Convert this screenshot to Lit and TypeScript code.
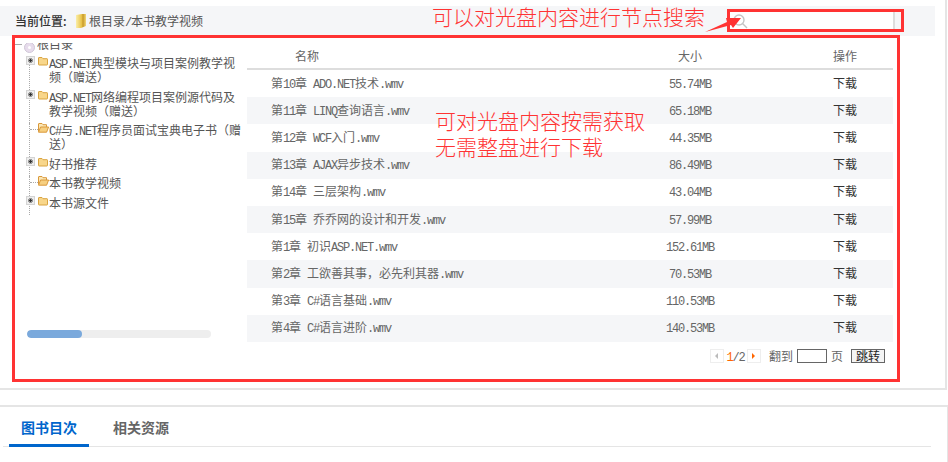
import { LitElement, html, css } from "lit";
import { customElement } from "lit/decorators.js";

const mixed = (t: string) =>
  t.split(/([\x20-\x7e]+)/).map((p, i) => (i % 2 ? html`<span class="a">${p}</span>` : p));

const files: [string, string][] = [
  ["第10章 ADO.NET技术.wmv", "55.74MB"],
  ["第11章 LINQ查询语言.wmv", "65.18MB"],
  ["第12章 WCF入门.wmv", "44.35MB"],
  ["第13章 AJAX异步技术.wmv", "86.49MB"],
  ["第14章 三层架构.wmv", "43.04MB"],
  ["第15章 乔乔网的设计和开发.wmv", "57.99MB"],
  ["第1章 初识ASP.NET.wmv", "152.61MB"],
  ["第2章 工欲善其事，必先利其器.wmv", "70.53MB"],
  ["第3章 C#语言基础.wmv", "110.53MB"],
  ["第4章 C#语言进阶.wmv", "140.53MB"],
];

const nodes: [string, boolean][] = [
  ["ASP.NET典型模块与项目案例教学视频（赠送）", true],
  ["ASP.NET网络编程项目案例源代码及教学视频（赠送）", true],
  ["C#与.NET程序员面试宝典电子书（赠送）", false],
  ["好书推荐", true],
  ["本书教学视频", false],
  ["本书源文件", true],
];

const plus = html`<svg class="plus" width="9" height="9" viewBox="0 0 9 9">
  <rect width="9" height="9" fill="#d4d4d4"/><rect x="1" y="1" width="7" height="7" fill="#eee"/>
  <rect x="2" y="3" width="5" height="3" fill="#999"/><rect x="3" y="2" width="3" height="5" fill="#999"/>
  <rect x="3" y="4" width="3" height="1" fill="#333"/><rect x="4" y="3" width="1" height="3" fill="#333"/>
</svg>`;
const folder = html`<svg class="folder" width="10" height="9" viewBox="0 0 10 9">
  <path d="M.5 2V1q0-.5.5-.5h3l1 1.2h4q.5 0 .5.5v5.3q0 .5-.5.5H1q-.5 0-.5-.5z" fill="#f8d68a" stroke="#d9a441"/>
</svg>`;
const openFolder = html`<svg class="folder open" width="11" height="10" viewBox="0 0 11 10">
  <path d="M.5 8.5V1q0-.5.5-.5h3l1 1.2h3.5V4" fill="#fbe7b5" stroke="#d9983a"/>
  <path d="M.5 9.2 2.6 4h8l-2 5.2z" fill="#f6cf80" stroke="#d9983a"/>
</svg>`;

@customElement("app-root")
export class AppRoot extends LitElement {
  static styles = css`
    :host { display: block; width: 948px; height: 462px; overflow: hidden; position: relative;
      background: #fff; color: #666; font: 12px/14px "Noto Sans CJK SC", sans-serif; }
    .a { font-family: "Liberation Mono", monospace; font-size: 12px; line-height: 0; letter-spacing: -1.2px; }
    .panel { box-sizing: border-box; width: 947px; height: 390px; padding-top: 6px;
      border-right: 2px solid #e5e5e5; border-bottom: 2px solid #e5e5e5; }
    .crumb { box-sizing: border-box; width: 935px; height: 30px; padding: 0 40px 0 15px; background: #f5f6f8;
      display: flex; align-items: center; color: #555; }
    .crumb b { font-weight: 500; color: #333; width: 61px; }
    .crumb svg { margin-right: 3px; }
    .search { margin-left: auto; width: 167px; height: 18px; box-sizing: border-box; background: #fff;
      border-right: 2px solid #ddd; display: flex; align-items: center; padding-left: 4px; }
    .body { display: flex; margin: 7px 0 0 15px; }
    .side { width: 232px; flex: none; }
    .tree { height: 287px; overflow: hidden; }
    .root { display: flex; margin-top: -6px; height: 19px; align-items: flex-start; color: #555; }
    .root .minus { width: 7px; height: 1px; background: #aaa; margin-top: 7px; }
    .root svg { margin: 5px 2px 0 2px; }
    .node { margin-left: 14px; border-left: 1px dotted #aaa; display: flex; align-items: flex-start; padding-bottom: 5.5px; color: #555; }
    .plus { margin-left: -4px; flex: none; }
    .folder { margin-left: 3px; margin-top: 1px; flex: none; }
    .folder.open { margin-left: 0; margin-top: 0; }
    .dash { width: 8px; margin-top: 6px; border-top: 1px dotted #aaa; flex: none; }
    .label { width: 195px; margin-left: 1px; line-height: 14px; }
    .node.leaf .label { margin-left: 0; }
    .scroll { width: 184px; height: 8px; margin-left: 12px; border-radius: 4px; background: #eee; overflow: hidden; }
    .thumb { width: 55px; height: 8px; border-radius: 4px; background: #7aa9dc; }
    .table { width: 646px; flex: none; }
    .grid { display: grid; grid-template-columns: 336px 214px 96px; align-items: center; }
    .head { height: 27px; box-sizing: border-box; border-bottom: 2px solid #ddd; }
    .head > div { text-align: center; }
    .head > div:first-child { text-align: left; padding-left: 48px; }
    .row { height: 27.2px; box-sizing: border-box; padding-bottom: 2px; }
    .row:nth-child(even) { background: #f5f6f8; }
    .row > div:first-child { padding-left: 24px; }
    .size { text-align: center; }
    .op { text-align: center; color: #333; }
    .pager { display: flex; justify-content: flex-end; align-items: center; height: 14px; margin-top: 7px; padding-right: 8px; }
    .pbtn { box-sizing: border-box; width: 14px; height: 14px; border: 1px solid #eee; display: flex; align-items: center; justify-content: center; }
    .tri-l { border: 3px solid transparent; border-right: 3px solid #bbb; border-left: 0; }
    .tri-r { border: 3px solid transparent; border-left: 3px solid #f60; border-right: 0; }
    .nums { width: 23px; text-align: center; }
    .cur { color: #f60; }
    .to { margin-left: 8px; }
    .inp { box-sizing: border-box; width: 30px; height: 14px; border: 1px solid #666; margin: 0 4px; }
    .go { box-sizing: border-box; width: 34px; height: 14px; margin-left: 8px; border: 1px solid #666; background: #f4f4f4;
      color: #222; text-align: center; line-height: 12px; }
    .panel2 { box-sizing: border-box; width: 948px; margin-top: 15px; height: 60px; border-top: 2px solid #e5e5e5; border-right: 1px solid #e5e5e5; }
    .tabs { display: flex; gap: 12px; box-sizing: border-box; width: 928px; height: 40px; margin-left: 3px; padding-left: 6px; border-bottom: 1px solid #e5e5e5; }
    .tab { box-sizing: border-box; width: 80px; height: 40px; line-height: 40px; text-align: center; font-size: 14px; font-weight: 700; }
    .tab.on { color: #06c; border-bottom: 3px solid #06c; }
    .mark { position: absolute; box-sizing: border-box; border: 3px solid #f33; }
    .m1 { left: 12px; top: 35px; width: 888px; height: 347px; }
    .m2 { left: 727px; top: 9px; width: 177px; height: 23px; }
    .note { position: absolute; color: #f33; font-size: 21px; line-height: 26px; font-weight: 300; white-space: nowrap; }
    .n1 { left: 432px; top: 3px; }
    .n2 { left: 435px; top: 107px; }
    .arrow { position: absolute; left: 700px; top: 10px; }
  `;

  render() {
    return html`
      <div class="panel">
        <div class="crumb">
          <b>当前位置:</b>
          <svg width="10" height="14" viewBox="0 0 10 14">
            <defs><linearGradient id="fg" x1="0" x2="1" y1="0" y2="0">
              <stop offset="0" stop-color="#fbeea8"/><stop offset=".55" stop-color="#e8c34a"/><stop offset=".7" stop-color="#c79a2a"/><stop offset="1" stop-color="#f3d978"/>
            </linearGradient></defs>
            <path d="M0 1 6 0h4v12l-5 2H0z" fill="url(#fg)"/>
          </svg>
          <span>${mixed("根目录/本书教学视频")}</span>
          <div class="search">
            <svg width="16" height="16" viewBox="0 0 16 16" fill="none" stroke="#c4c4c4" stroke-width="1.4"><circle cx="7" cy="7" r="5"/><path d="M10.5 10.5 15 15"/></svg>
          </div>
        </div>
        <div class="body">
          <div class="side">
            <div class="tree">
              <div class="root">
                <span class="minus"></span>
                <svg width="11" height="11" viewBox="0 0 11 11"><circle cx="5.5" cy="5.5" r="5" fill="#e7dcec" stroke="#cfc6d6"/><circle cx="5.5" cy="5.5" r="1.5" fill="#fff"/></svg>
                <span>根目录</span>
              </div>
              ${nodes.map(([t, closed]) => html`
                <div class="node ${closed ? "" : "leaf"}">
                  ${closed ? html`${plus}${folder}` : html`<span class="dash"></span>${openFolder}`}
                  <div class="label">${mixed(t)}</div>
                </div>`)}
            </div>
            <div class="scroll"><div class="thumb"></div></div>
          </div>
          <div class="table">
            <div class="grid head"><div>名称</div><div>大小</div><div>操作</div></div>
            <div>
              ${files.map(([n, s]) => html`
                <div class="grid row"><div>${mixed(n)}</div><div class="size">${mixed(s)}</div><div class="op">下载</div></div>`)}
            </div>
            <div class="pager">
              <span class="pbtn"><i class="tri-l"></i></span>
              <span class="nums"><span class="a cur">1</span><span class="a">/2</span></span>
              <span class="pbtn"><i class="tri-r"></i></span>
              <span class="to">翻到</span>
              <span class="inp"></span>
              <span>页</span>
              <span class="go">跳转</span>
            </div>
          </div>
        </div>
      </div>
      <div class="panel2">
        <div class="tabs">
          <div class="tab on">图书目次</div>
          <div class="tab">相关资源</div>
        </div>
      </div>
      <div class="mark m1"></div>
      <div class="mark m2"></div>
      <div class="note n1">可以对光盘内容进行节点搜索</div>
      <div class="note n2">可对光盘内容按需获取<br />无需整盘进行下载</div>
      <svg class="arrow" width="44" height="26" viewBox="0 0 44 26"><polygon points="5,22 27,12 26,8 41,8 33,18 31,15" fill="#f33"/></svg>
    `;
  }
}
